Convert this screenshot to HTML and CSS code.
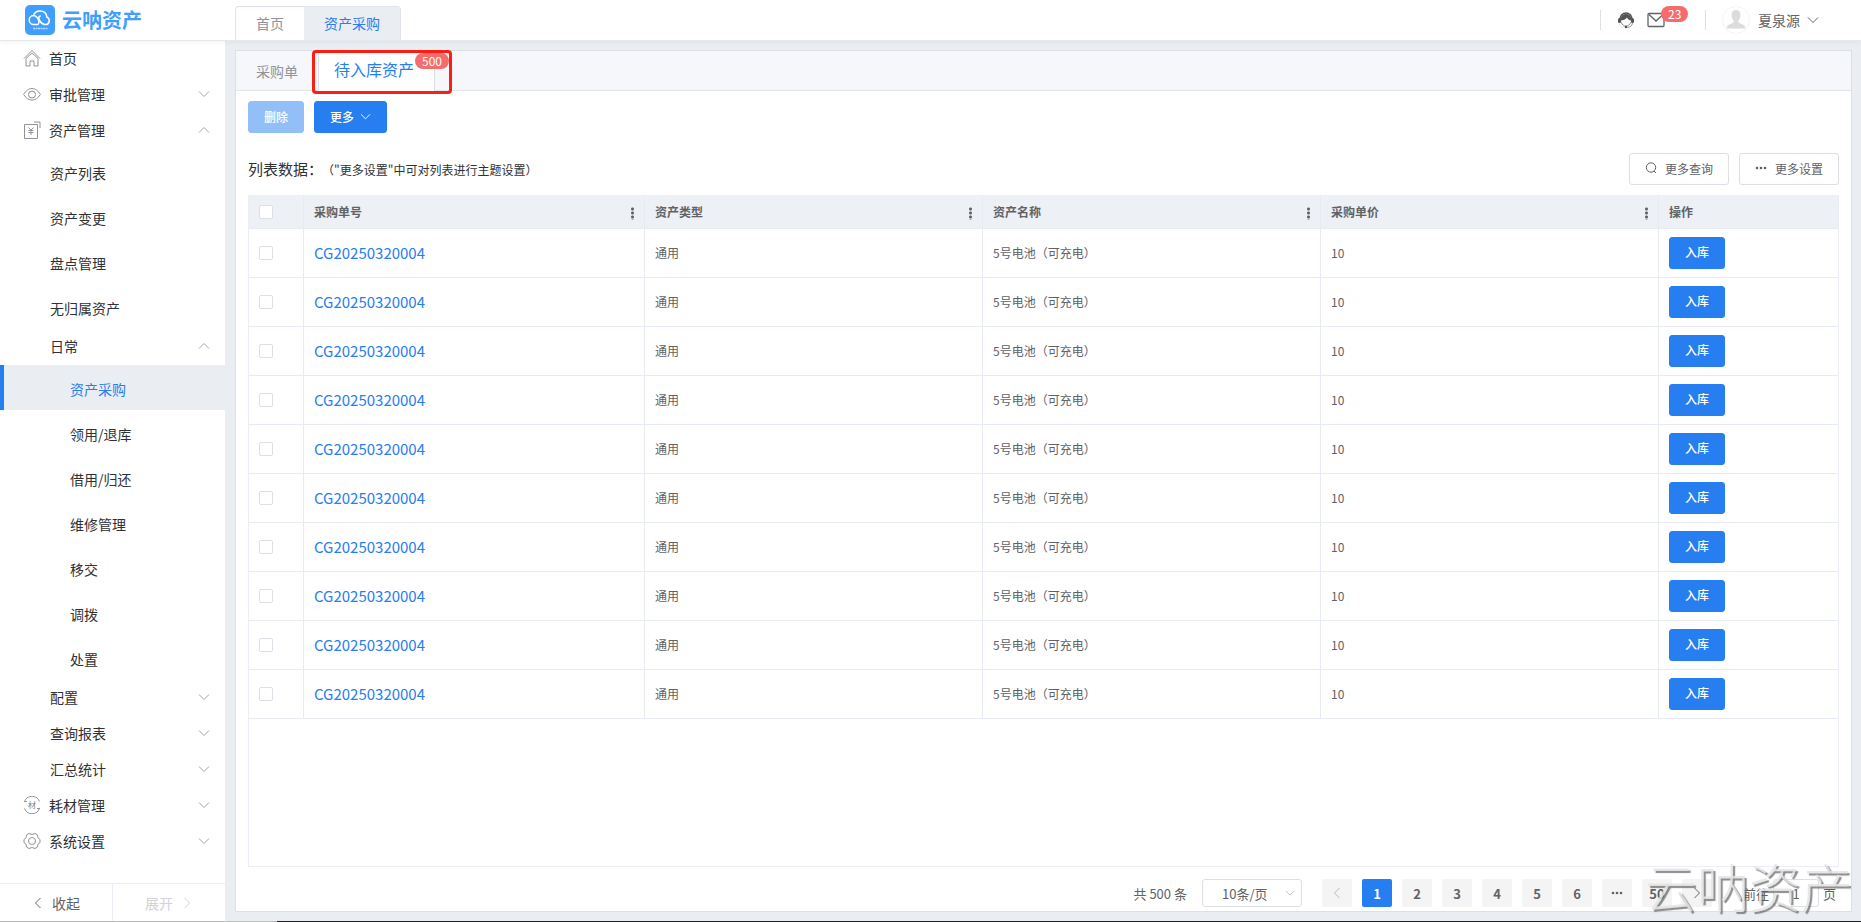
FILE: index.html
```
<!DOCTYPE html>
<html lang="zh-CN">
<head>
    <meta charset="UTF-8">
    <title>云呐资产</title>
    <link rel="stylesheet" href="styles.css">
</head>
<body>
    <svg class="defs">
        <symbol id="down" viewBox="0 0 12 12"><path d="M1 3.500l5 5 5-5"/></symbol>
        <symbol id="up" viewBox="0 0 12 12"><path d="M1 8.500l5-5 5 5"/></symbol>
        <symbol id="left" viewBox="0 0 12 12"><path d="M8.500 1l-5 5 5 5"/></symbol>
        <symbol id="right" viewBox="0 0 12 12"><path d="M3.500 1l5 5-5 5"/></symbol>
    </svg>

    <header class="header">
        <div class="logo">
            <svg class="logo-img" viewBox="0 0 30 30">
                <rect width="30" height="30" rx="5" fill="#409eff"/>
                <g fill="none" stroke="#fff" stroke-width="1.500" stroke-linecap="round">
                    <path d="M13 19.500H9a4.500 4.500 0 0 1-.5-9c1-3 3.500-4.500 6.500-4.500 4 0 6.500 2.500 6.800 6a4 4 0 0 1-.3 7.500c-4 .5-5.500-1.500-7-4-1.200-2-1-4 .8-4.500"/>
                    <path d="M8.500 10.500c2 0 3 1 4 2.500s2 4 1 5.500"/>
                </g>
                <path d="M8 23.500h15" stroke="#b9dcff" stroke-width="1.500" stroke-dasharray="2 .5"/>
            </svg>
            <span>云呐资产</span>
        </div>
        <nav class="page-tabs">
            <a href="#">首页</a>
            <a href="#" class="current">资产采购</a>
        </nav>
        <div class="tools">
            <button class="tool service" aria-label="客服">
                <svg width="18" height="18" viewBox="0 0 18 18">
                    <path d="M3 8a6 6 0 0 1 12 0" fill="none" stroke="#555" stroke-width="1.500"/>
                    <path d="M3.500 9.500C3.500 5 6 3 9 3s5.500 2 5.500 6.500C12 9.500 10.500 8 10 6.500 9 8.500 6 9.500 3.500 9.500z" fill="#555"/>
                    <rect x="1" y="7" width="3" height="5" rx="1.500" fill="#555"/>
                    <rect x="14" y="7" width="3" height="5" rx="1.500" fill="#555"/>
                    <path d="M4 11c1 3 3 4 5 4s4-1 5-4M15.500 12c-.5 3-2.500 4-5 4.500" fill="none" stroke="#777" stroke-width=".8"/>
                    <circle cx="9" cy="16" r="1.300" fill="#555"/>
                </svg>
            </button>
            <button class="tool mail" aria-label="消息">
                <svg width="18" height="16" viewBox="0 0 18 16" fill="none" stroke="#606266" stroke-width="1.300">
                    <rect x="1" y="1.500" width="16" height="13" rx="1"/>
                    <path d="M2 2.500l7 6.500 7-6.500"/>
                </svg>
                <span class="badge">23</span>
            </button>
            <button class="user">
                <svg width="28" height="28" viewBox="0 0 28 28" fill="#dcdcdc">
                    <circle cx="14" cy="14" r="13.500" fill="#fff" stroke="#f3f3f3"/>
                    <path d="M14 4c3 0 4.500 2 4.500 5 0 2.500-1 4-2 5.500v2c2 1.500 7 2 7 6H4.500c0-4 5-4.500 7-6v-2c-1-1.500-2-3-2-5.500C9.500 6 11 4 14 4z"/>
                </svg>
                <span>夏泉源</span>
                <svg class="arrow"><use href="#down"/></svg>
            </button>
        </div>
    </header>

    <div class="body">
        <aside class="sidebar">
            <nav class="menu">
                <a href="#" class="item">
                    <svg class="icon" viewBox="0 0 18 18"><path d="M1 9.500l8-8 8 8M3 9.500V17h4v-5h4v5h4V9.500L9 4z"/></svg>首页
                </a>
                <a href="#" class="item">
                    <svg class="icon" viewBox="0 0 18 18"><path d="M.7 9.500C5 1.500 13 1.500 17.300 9.500 13 17 5 17 .7 9.500z"/><circle cx="9" cy="9.500" r="3.500"/></svg>审批管理
                    <svg class="arrow"><use href="#down"/></svg>
                </a>
                <a href="#" class="item">
                    <svg class="icon" viewBox="0 0 18 18"><path d="M1.500 3.500h13V17.500h-13zM11 1h6v6M5.500 6.500L8 9l2.500-2.500M5.500 9.500h5M5.500 11.500h5M8 9v5"/></svg>资产管理
                    <svg class="arrow"><use href="#up"/></svg>
                </a>
                <a href="#" class="sub">资产列表</a>
                <a href="#" class="sub">资产变更</a>
                <a href="#" class="sub">盘点管理</a>
                <a href="#" class="sub">无归属资产</a>
                <a href="#" class="item group">日常<svg class="arrow"><use href="#up"/></svg></a>
                <a href="#" class="sub deep active">资产采购</a>
                <a href="#" class="sub deep">领用/退库</a>
                <a href="#" class="sub deep">借用/归还</a>
                <a href="#" class="sub deep">维修管理</a>
                <a href="#" class="sub deep">移交</a>
                <a href="#" class="sub deep">调拨</a>
                <a href="#" class="sub deep">处置</a>
                <a href="#" class="item group">配置<svg class="arrow"><use href="#down"/></svg></a>
                <a href="#" class="item group">查询报表<svg class="arrow"><use href="#down"/></svg></a>
                <a href="#" class="item group">汇总统计<svg class="arrow"><use href="#down"/></svg></a>
                <a href="#" class="item">
                    <svg class="icon" viewBox="0 0 18 18"><path d="M1.500 5.500a8 8 0 0 1 15 0M1.500 12.500a8 8 0 0 0 15 0M1 5.500h3M14 12.500h3"/><text x="5" y="12">材</text></svg>耗材管理
                    <svg class="arrow"><use href="#down"/></svg>
                </a>
                <a href="#" class="item">
                    <svg class="icon" viewBox="0 0 18 18"><path d="M6 1.500Q9 3.500 12 1.500L14.500 3q-.5 3 2.500 4.500v3q-3 1.500-2.500 4.500L12 16.500Q9 14.500 6 16.500L3.500 15q.5-3-2.500-4.500v-3Q4 6 3.500 3z"/><circle cx="9" cy="9" r="3.500"/></svg>系统设置
                    <svg class="arrow"><use href="#down"/></svg>
                </a>
            </nav>
            <div class="fold">
                <button><svg class="arrow"><use href="#left"/></svg>收起</button>
                <button disabled>展开<svg class="arrow"><use href="#right"/></svg></button>
            </div>
        </aside>

        <main class="main">
            <section class="panel">
                <nav class="panel-tabs">
                    <a href="#">采购单</a>
                    <a href="#" class="current">待入库资产<span class="badge">500</span></a>
                </nav>
                <div class="content">
                    <div class="actions">
                        <button class="btn primary" disabled>删除</button>
                        <button class="btn primary">更多<svg class="arrow"><use href="#down"/></svg></button>
                    </div>
                    <div class="list-head">
                        <p>列表数据：<small>（"更多设置"中可对列表进行主题设置）</small></p>
                        <button class="btn"><svg class="btn-icon" viewBox="0 0 12 12"><circle cx="6" cy="5.500" r="4.700"/><path d="M9 9l2 2"/></svg>更多查询</button>
                        <button class="btn"><svg class="btn-icon dots" viewBox="0 0 12 12"><circle cx="2" cy="6" r="1.300"/><circle cx="6" cy="6" r="1.300"/><circle cx="10" cy="6" r="1.300"/></svg>更多设置</button>
                    </div>
                    <div class="table-box">
                        <table>
                            <colgroup><col class="c-check"><col class="c-no"><col><col><col><col class="c-op"></colgroup>
                            <thead>
                                <tr>
                                    <th><input type="checkbox" aria-label="全选"></th>
                                    <th class="more">采购单号</th>
                                    <th class="more">资产类型</th>
                                    <th class="more">资产名称</th>
                                    <th class="more">采购单价</th>
                                    <th>操作</th>
                                </tr>
                            </thead>
                            <tbody id="rows"></tbody>
                        </table>
                    </div>
                    <div class="pager">
                        <span class="total">共 500 条</span>
                        <span class="size">
                            <select aria-label="每页条数"><option>10条/页</option></select>
                            <svg class="arrow"><use href="#down"/></svg>
                        </span>
                        <button disabled aria-label="上一页"><svg class="arrow"><use href="#left"/></svg></button>
                        <button class="current">1</button>
                        <button>2</button>
                        <button>3</button>
                        <button>4</button>
                        <button>5</button>
                        <button>6</button>
                        <button aria-label="后几页"><svg class="btn-icon dots" viewBox="0 0 12 12"><circle cx="2" cy="6" r="1.300"/><circle cx="6" cy="6" r="1.300"/><circle cx="10" cy="6" r="1.300"/></svg></button>
                        <button>50</button>
                        <button aria-label="下一页"><svg class="arrow"><use href="#right"/></svg></button>
                        <label class="jump">前往<input type="text" value="1">页</label>
                    </div>
                </div>
            </section>
        </main>
    </div>
    <div class="watermark">云呐资产</div>

    <script>
        var rows = document.getElementById("rows");
        var html = "";
        for (var i = 1; i <= 10; i++) {
            html += '<tr><td><input type="checkbox" aria-label="选择第' + i + '行"></td>' +
                '<td><a href="#">CG20250320004</a></td><td>通用</td>' +
                '<td>5号电池（可充电）</td><td>10</td>' +
                '<td><button class="btn primary">入库</button></td></tr>';
        }
        rows.innerHTML = html;
    </script>
</body>
</html>
```
FILE: styles.css
```
*,
*::after {
    box-sizing: border-box;
}

body {
    margin: 0;
    height: 100vh;
    display: flex;
    flex-direction: column;
    overflow: hidden;
    position: relative;
    padding-bottom: 1px;
    font-family: "Noto Sans CJK SC", "Noto Sans", sans-serif;
    font-size: 14px;
    color: #303133;
    background: linear-gradient(to right, #bbb 277px, #1b1d22 277px) bottom / 100% 1px no-repeat #eaedf2;
}

a {
    color: inherit;
    text-decoration: none;
}

button,
input,
select {
    font: inherit;
    color: inherit;
    padding: 0;
    margin: 0;
    border: 0;
    background: none;
}

.defs {
    display: none;
}

.arrow {
    width: 12px;
    height: 12px;
    fill: none;
    stroke: currentColor;
    flex: none;
}

.badge {
    position: absolute;
    height: 16px;
    padding: 0 7px;
    border-radius: 8px;
    background: #f56c6c;
    color: #fff;
    font-size: 12px;
    line-height: 16px;
}

/* header */
.header {
    display: flex;
    height: 41px;
    flex: none;
    background: #fff;
    border-bottom: 1px solid #e6e8ec;
    box-shadow: 0 1px 6px rgba(0, 21, 41, .06);
    z-index: 1;
}

.logo {
    display: flex;
    width: 235px;
    padding: 5px 0 5px 25px;
    gap: 7px;
    color: #409eff;
    font-size: 20px;
    font-weight: 700;
    line-height: 30px;
}

.logo-img {
    width: 30px;
    height: 30px;
}

.page-tabs {
    display: flex;
    margin-top: 6px;
    border: 1px solid #dfe3ea;
    border-bottom: 0;
    border-radius: 4px 4px 0 0;
    color: #909399;
    line-height: 33px;
}

.page-tabs a {
    padding: 0 20px;
}

.page-tabs .current {
    background: #eaedf2;
    color: #267ef0;
}

.tools {
    display: flex;
    margin-left: auto;
    padding: 0 42px 1px 0;
    align-items: center;
    color: #606266;
}

.tool {
    display: flex;
    position: relative;
}

.service {
    height: 20px;
    align-items: center;
    padding-left: 16px;
    border-left: 1px solid #dcdfe6;
}

.mail {
    height: 20px;
    align-items: center;
    padding: 0 40px 0 12px;
    border-right: 1px solid #dcdfe6;
}

.mail .badge {
    left: 26px;
    top: -4px;
}

.user {
    display: flex;
    align-items: center;
    margin-left: 16px;
}

.user span {
    margin: 0 7px 0 8px;
}

/* sidebar */
.body {
    display: flex;
    flex: 1;
    min-height: 0;
}

.sidebar {
    display: flex;
    flex-direction: column;
    width: 225px;
    flex: none;
    background: #fff;
}

.menu {
    flex: 1;
    overflow: hidden;
}

.item {
    display: flex;
    height: 36px;
    align-items: center;
    padding: 0 15px 2px 23px;
}

.item .arrow {
    margin-left: auto;
    color: #a0a4ac;
}

.icon {
    width: 18px;
    height: 18px;
    margin-right: 8px;
    fill: none;
    stroke: #909399;
}

.icon text {
    fill: #808389;
    stroke: none;
    font-size: 8px;
}

.group {
    padding-left: 50px;
}

.sub {
    display: block;
    height: 45px;
    padding: 3px 0 0 50px;
    line-height: 42px;
}

.deep {
    padding-left: 70px;
}

.sub.active {
    padding-left: 66px;
    border-left: 4px solid #267ef0;
    background: #eaedf2;
    color: #267ef0;
}

.fold {
    display: flex;
    height: 38px;
    border-top: 1px solid #ebeef5;
}

.fold button {
    display: flex;
    flex: 1;
    align-items: center;
    justify-content: center;
    gap: 8px;
    color: #606266;
}

.fold button + button {
    border-left: 1px solid #ebeef5;
    color: #d0d3d9;
}

/* panel */
.main {
    display: flex;
    flex: 1;
    min-width: 0;
    padding: 9px 9px 9px 10px;
}

.panel {
    display: flex;
    flex-direction: column;
    flex: 1;
    min-width: 0;
    background: #fff;
    border: 1px solid #dcdfe6;
}

.panel-tabs {
    display: flex;
    height: 40px;
    padding-left: 20px;
    background: #f5f7fa;
    border-bottom: 1px solid #dfe3ea;
    color: #909399;
    line-height: 40px;
}

.panel-tabs .current {
    position: relative;
    height: 40px;
    margin-left: 20px;
    padding: 0 20px 0 15px;
    background: #fff;
    border: solid #dcdfe6;
    border-width: 0 1px;
    color: #267ef0;
    font-size: 16px;
    line-height: 36px;
}

/* red frame round the tab with pending items */
.panel-tabs .current::after {
    content: "";
    position: absolute;
    left: -7px;
    top: -1px;
    width: 140px;
    height: 44px;
    border: 3px solid #fb1f12;
    border-radius: 4px;
}

.panel-tabs .badge {
    left: 96px;
    top: 2px;
}

.content {
    display: flex;
    flex-direction: column;
    flex: 1;
    min-height: 0;
    padding: 10px 12px 3px;
}

.actions,
.list-head {
    display: flex;
    gap: 10px;
}

.btn {
    display: inline-flex;
    height: 32px;
    align-items: center;
    justify-content: center;
    gap: 8px;
    padding: 0 15px 2px;
    border: 1px solid #dcdfe6;
    border-radius: 3px;
    background: #fff;
    color: #606266;
    font-size: 12px;
}

.btn.primary {
    gap: 6px;
    border-color: #267ef0;
    background: #267ef0;
    color: #fff;
    font-weight: 500;
}

.btn.primary:disabled {
    border-color: #93bff8;
    background: #93bff8;
}

.actions .arrow {
    width: 11px;
    height: 11px;
}

.btn-icon {
    width: 12px;
    height: 12px;
    fill: none;
    stroke: currentColor;
}

.dots {
    fill: currentColor;
    stroke: none;
}

.list-head {
    align-items: center;
    margin: 20px 0 10px;
}

.list-head p {
    flex: 1;
    margin: 0;
    padding-bottom: 2px;
    font-size: 15px;
}

.list-head small {
    margin-left: 5px;
    font-size: 12px;
}

.table-box {
    flex: 1;
    min-height: 0;
    border: 1px solid #ebeef5;
    border-top: 0;
}

table {
    width: 100%;
    table-layout: fixed;
    border-collapse: separate;
    border-spacing: 0;
    font-size: 12px;
    color: #606266;
}

.c-check {
    width: 55px;
}

.c-no {
    width: 341px;
}

.c-op {
    width: 179px;
}

th,
td {
    height: 49px;
    padding: 0 10px 1px;
    border-right: 1px solid #e8ebf3;
    border-bottom: 1px solid #e8ebf3;
    text-align: left;
}

th:last-child,
td:last-child {
    border-right: 0;
}

th {
    height: 34px;
    padding-bottom: 0;
    background: #edf0f5;
}

.more::after {
    content: "";
    float: right;
    width: 3px;
    height: 13px;
    margin: 4px 0 0;
    background: radial-gradient(circle, #606266 1px, transparent 2px) 0 0 / 3px 4px;
}

td a {
    color: #267ef0;
    font-size: 15px;
}

td .btn {
    vertical-align: middle;
}

input[type=checkbox] {
    display: block;
    appearance: none;
    width: 14px;
    height: 14px;
    border: 1px solid #dcdfe6;
    border-radius: 2px;
    background: #fff;
}

/* pager */
.pager {
    display: flex;
    align-items: center;
    justify-content: flex-end;
    gap: 10px;
    height: 41px;
    padding-top: 11px;
    font-size: 13px;
    color: #606266;
}

.size {
    position: relative;
    margin: 0 10px 0 5px;
}

.size select {
    width: 100px;
    height: 28px;
    padding-left: 19px;
    appearance: none;
    border: 1px solid #dcdfe6;
    border-radius: 3px;
}

.size .arrow {
    position: absolute;
    right: 7px;
    top: 9px;
    width: 10px;
    height: 10px;
    color: #b4b8bf;
}

.pager button {
    display: flex;
    align-items: center;
    justify-content: center;
    width: 30px;
    height: 28px;
    border-radius: 2px;
    background: #f4f4f5;
    font-weight: 700;
}

.pager button:disabled {
    color: #b4b8bf;
}

.pager .current {
    background: #267ef0;
    color: #fff;
}

.jump {
    display: flex;
    align-items: center;
    gap: 4px;
    margin: 0 3px 0 21px;
}

.jump input {
    width: 46px;
    height: 28px;
    border: 1px solid #dcdfe6;
    border-radius: 3px;
    text-align: center;
}

.watermark {
    position: absolute;
    right: 8px;
    bottom: 8px;
    z-index: 2;
    color: rgba(228, 228, 228, .85);
    font-size: 52px;
    font-weight: 300;
    line-height: 56px;
    text-shadow: 2px 2px 1px rgba(90, 90, 90, .7);
    pointer-events: none;
}
```
